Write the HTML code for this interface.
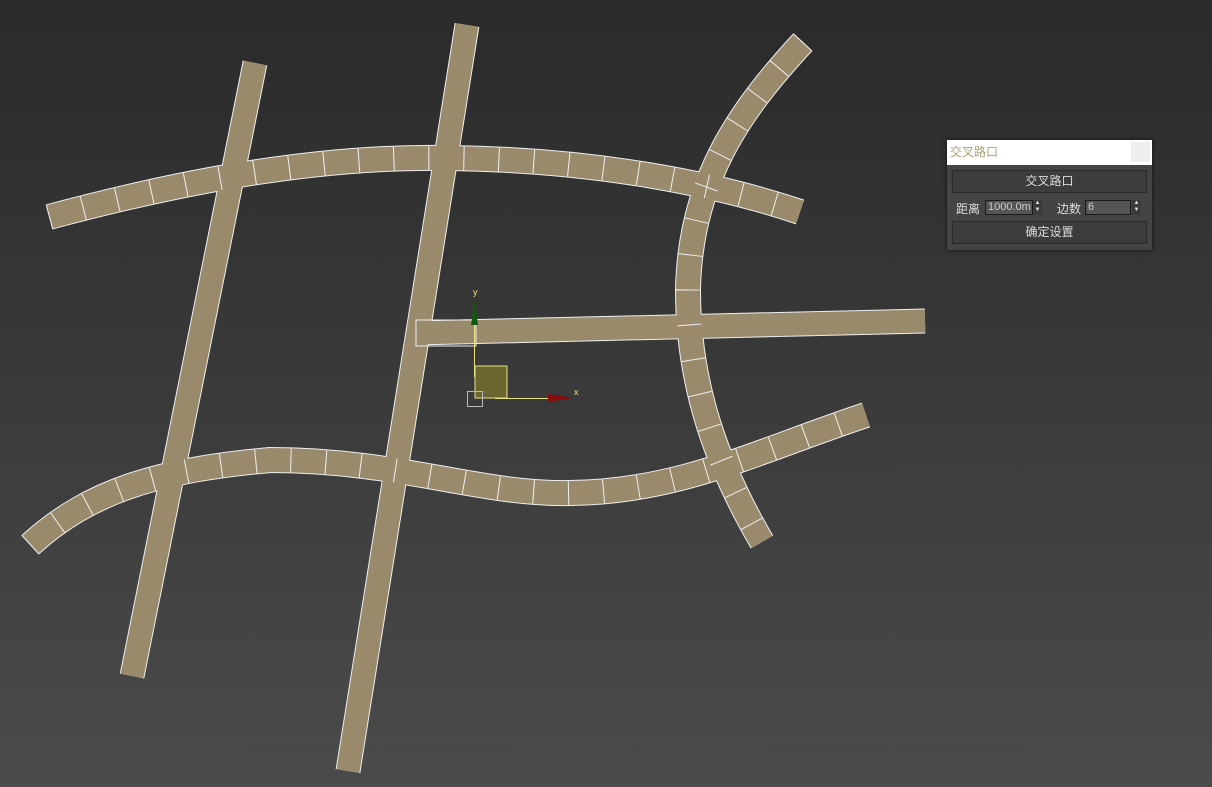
<!DOCTYPE html>
<html><head><meta charset="utf-8"><style>
html,body{margin:0;padding:0;width:1212px;height:787px;overflow:hidden}
body{background:linear-gradient(#2a2a2a,#3a3a3a 50%,#4b4b4b);font-family:"Liberation Sans","Noto Sans CJK SC",sans-serif;position:relative}
svg{position:absolute;left:0;top:0}
.dlg{position:absolute;left:947px;top:140px;width:205px;height:110px;background:#444;box-shadow:0 0 4px #111}
.tt{height:25px;background:#fff;color:#a89f70;font-size:12px;line-height:25px;padding-left:3px;position:relative}
.tt i{position:absolute;right:2px;top:2px;width:19px;height:20px;background:#eee}
.btn{position:absolute;left:5px;width:195px;height:23px;background:#3c3c3c;border:1px solid #2a2a2a;box-sizing:border-box;color:#ddd;font-size:12px;text-align:center;line-height:21px}
.lb{position:absolute;color:#ddd;font-size:12px;top:60px}
.in{position:absolute;top:60px;height:15px;background:#555;border:1px solid #1a1a1a;color:#ccc;font-size:11px;line-height:13px;padding-left:2px;box-sizing:border-box}
.sp{position:absolute;top:60px;width:9px;height:15px;background:#3a3a3a;color:#ddd;font-size:6px;line-height:7px;text-align:center}
</style></head><body>
<svg width="1212" height="787" viewBox="0 0 1212 787">
<defs>
<g id="s">
<path d="M255,63 L132,676"/>
<path d="M467,25 L348,771"/>
<path d="M415,333 L925,321"/>
</g>
<g id="c">
<path d="M49,217 C150,190 300,155 450,158 C600,160 720,185 800,212"/>
<path d="M803,42 C740,110 690,180 688,290 C688,390 720,470 762,542"/>
<path d="M30,545 C90,490 160,470 270,460 C400,460 480,495 570,493 C680,492 760,450 866,415"/>
</g>
</defs>
<g fill="none">
<use href="#s" stroke="#eee" stroke-width="25"/>
<use href="#c" stroke="#eee" stroke-width="26"/>
<use href="#s" stroke="#9a8a6c" stroke-width="23"/>
<use href="#c" stroke="#9a8a6c" stroke-width="24"/>
<use href="#c" stroke="#eee" stroke-width="24" stroke-dasharray="1 34"/>
</g>
<rect x="416" y="320" width="60" height="26" fill="none" stroke="#eee" stroke-width="1"/>
<rect x="475" y="366" width="32" height="32" fill="#6b6530" stroke="#e8e27a"/>
<line x1="474.5" y1="325" x2="474.5" y2="377" stroke="#e8e27a"/>
<line x1="495" y1="398.5" x2="550" y2="398.5" stroke="#e8e27a"/>
<polygon points="471,325 478,325 474.5,300" fill="#0f5a0f"/>
<polygon points="548,394 548,402 573,398" fill="#8a0b0b"/>
<rect x="467.5" y="391.5" width="15" height="15" fill="none" stroke="#bbb"/>
<text x="473" y="295" fill="#e8e27a" font-size="9" font-family="Liberation Sans">y</text>
<text x="574" y="395" fill="#e8e27a" font-size="9" font-family="Liberation Sans">x</text>
</svg>
<div class="dlg">
<div class="tt">交叉路口<i></i></div>
<div class="btn" style="top:30px">交叉路口</div>
<span class="lb" style="left:9px">距离</span>
<div class="in" style="left:38px;width:48px">1000.0m</div>
<div class="sp" style="left:86px">▲<br>▼</div>
<span class="lb" style="left:110px">边数</span>
<div class="in" style="left:138px;width:46px">6</div>
<div class="sp" style="left:185px">▲<br>▼</div>
<div class="btn" style="top:81px">确定设置</div>
</div>
</body></html>
